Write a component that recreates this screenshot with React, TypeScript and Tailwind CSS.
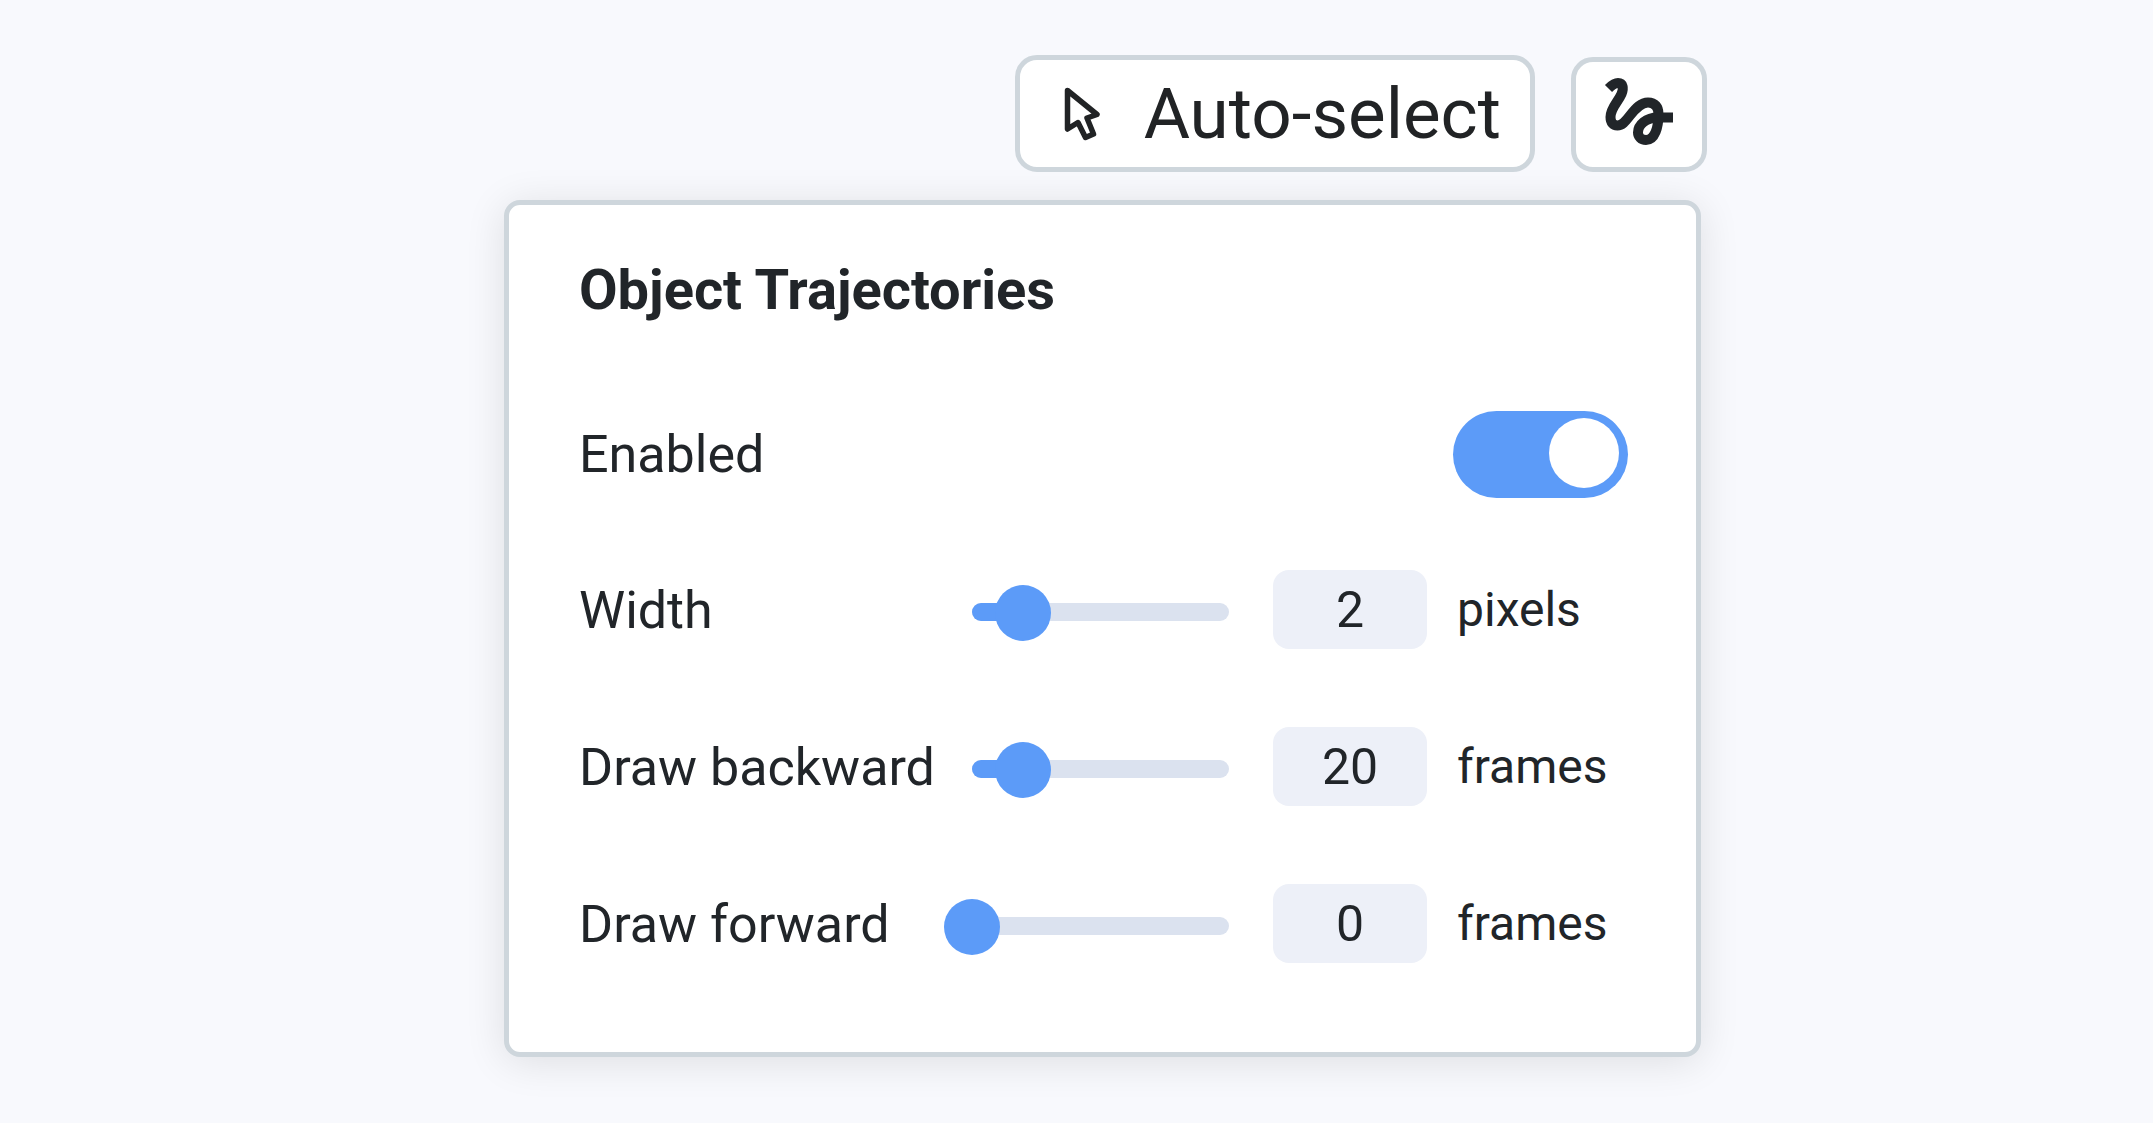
import { useState } from "react";

type SettingProps = {
  id: string;
  label: string;
  unit: string;
  max: number;
  initial: number;
};

function CursorIcon() {
  return (
    <svg viewBox="0 0 42 60" className="h-[60px] w-[42px] shrink-0" fill="none" aria-hidden="true">
      <path
        d="M5.5 6.5 L35 30.5 L25 34 L31.5 50 L23.5 53.5 L16 38.5 L5.5 45 Z"
        stroke="currentColor"
        strokeWidth="5.5"
        strokeLinejoin="round"
      />
    </svg>
  );
}

function TrajectoryIcon() {
  return (
    <svg viewBox="0 0 70 70" className="size-[70px] shrink-0" fill="none" aria-hidden="true">
      <path
        d="M4.5 11.5 C8 8 11 6 14 6 C19 6 20 11 17.5 17 C14 25 6.500 31 6.500 40 C6.500 45.500 9 48.500 13.500 48.500 C18 48.500 21 45 26 38.500 C32 31 37 25.500 44 25.500 C51 25.500 54.500 30 54.500 37 C54.500 50 51 63 42 63 C37 63 34 59.500 34 55.500 C34 48 42 40.500 54 40.500 H69"
        stroke="currentColor"
        strokeWidth="10"
      />
    </svg>
  );
}

function SettingRow({ id, label, unit, max, initial }: SettingProps) {
  const [value, setValue] = useState(initial);
  const update = (raw: string) => setValue(Math.min(max, Math.max(0, Number(raw) || 0)));

  return (
    <div className="flex h-[79px] items-center">
      <label htmlFor={id} className="flex-1 pt-[3px] text-[52px] leading-[60px] whitespace-nowrap">
        {label}
      </label>
      <div className="relative mt-[7px] h-14 w-[257px] shrink-0">
        <div className="absolute inset-x-0 top-[18px] h-[18px] overflow-hidden rounded-full bg-[#dbe2ef]">
          <div className="h-full bg-[#5c9bf8]" style={{ width: `${(value / max) * 100}%` }} />
        </div>
        <input
          type="range"
          aria-label={`${label} slider`}
          min={0}
          max={max}
          value={value}
          onChange={(e) => update(e.target.value)}
          className="absolute inset-y-0 -left-7 m-0 h-14 w-[313px] cursor-pointer appearance-none bg-transparent [&::-webkit-slider-thumb]:size-14 [&::-webkit-slider-thumb]:appearance-none [&::-webkit-slider-thumb]:rounded-full [&::-webkit-slider-thumb]:bg-[#5c9bf8]"
        />
      </div>
      <input
        id={id}
        type="text"
        inputMode="numeric"
        value={value}
        onChange={(e) => update(e.target.value)}
        className="ml-11 h-[79px] w-[154px] shrink-0 rounded-2xl bg-[#edf0f8] text-center text-[50px] leading-[60px] outline-none"
      />
      <span className="ml-[30px] w-[171px] shrink-0 text-[48px] leading-[60px]">{unit}</span>
    </div>
  );
}

export default function App() {
  const [enabled, setEnabled] = useState(true);

  return (
    <main className="flex min-h-screen justify-center bg-[#f8f9fd] pt-[55px] pb-16 pl-[58px] font-[Roboto,sans-serif] text-[#212529]">
      <div className="w-full max-w-[1203px]">
        <div className="flex items-end justify-end gap-9">
          <button
            type="button"
            className="flex h-[117px] items-center gap-10 rounded-[22px] border-5 border-[#ced6dc] bg-white pt-px pr-[29px] pl-[42px] text-[71px] leading-[84px] text-[#212325]"
          >
            <CursorIcon />
            Auto-select
          </button>
          <button
            type="button"
            aria-label="Object trajectories"
            className="flex h-[115px] w-[136px] justify-center rounded-[22px] border-5 border-[#ced6dc] bg-white pt-[15px]"
          >
            <TrajectoryIcon />
          </button>
        </div>

        <section className="mt-7 mr-1.5 rounded-2xl border-5 border-[#ced6dc] bg-white pt-[52px] pr-[68px] pb-[89px] pl-[70px] shadow-[0_5px_40px_rgba(0,0,0,0.11)]">
          <h1 className="text-[56px] leading-[66px] font-bold">Object Trajectories</h1>
          <div className="mt-[88px] flex h-[87px] items-center justify-between">
            <label htmlFor="enabled" className="text-[52px] leading-[60px]">
              Enabled
            </label>
            <input
              id="enabled"
              type="checkbox"
              role="switch"
              checked={enabled}
              onChange={(e) => setEnabled(e.target.checked)}
              className="flex h-[87px] w-[175px] cursor-pointer appearance-none rounded-full bg-[#c3ccd8] px-[9px] pt-[7px] before:size-[70px] before:rounded-full before:bg-white checked:justify-end checked:bg-[#5c9bf8]"
            />
          </div>
          <div className="mt-[72px] flex flex-col gap-[78px]">
            <SettingRow id="width" label="Width" unit="pixels" max={10} initial={2} />
            <SettingRow id="backward" label="Draw backward" unit="frames" max={100} initial={20} />
            <SettingRow id="forward" label="Draw forward" unit="frames" max={100} initial={0} />
          </div>
        </section>
      </div>
    </main>
  );
}
